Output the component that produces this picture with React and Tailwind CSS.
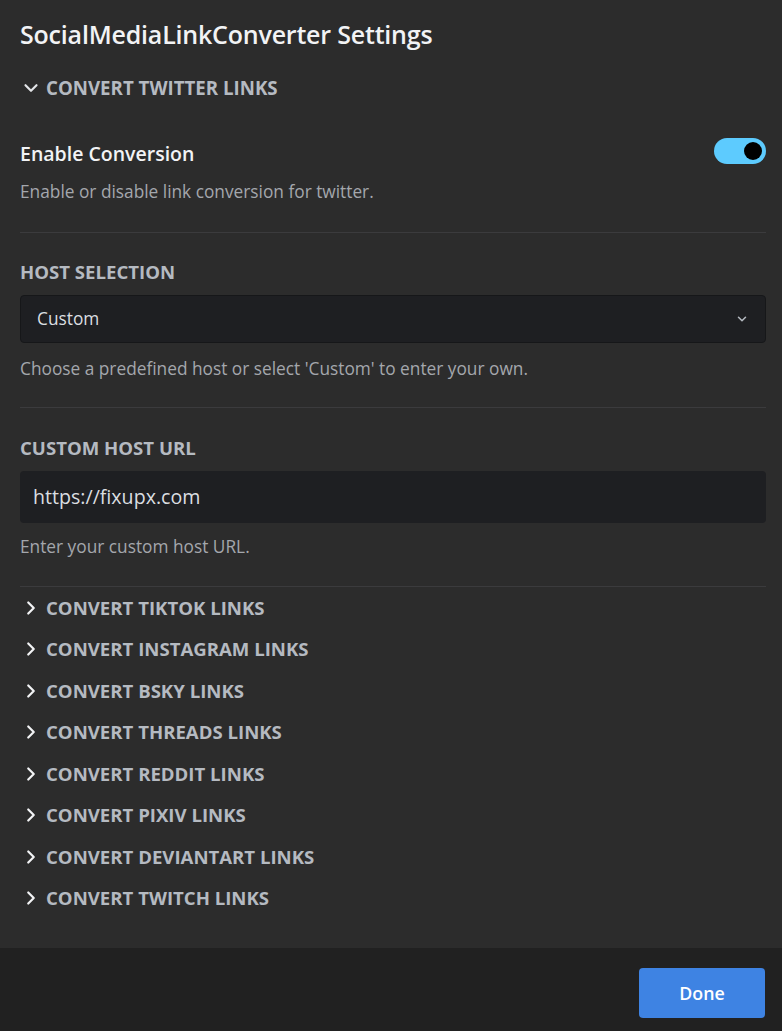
import React from "react";

const font = { fontFamily: '"Open Sans", "Noto Sans", sans-serif' };

function ChevronDown({ className, sw = "2.4" }) {
  return (
    <svg viewBox="0 0 24 24" className={className} fill="none" stroke="currentColor" strokeWidth={sw} strokeLinecap="round" strokeLinejoin="round">
      <path d="M6 9l6 6 6-6" />
    </svg>
  );
}

function ChevronRight({ className }) {
  return (
    <svg viewBox="0 0 24 24" className={className} fill="none" stroke="currentColor" strokeWidth="2.4" strokeLinecap="round" strokeLinejoin="round">
      <path d="M9 6l6 6-6 6" />
    </svg>
  );
}

const collapsed = [
  "CONVERT TIKTOK LINKS",
  "CONVERT INSTAGRAM LINKS",
  "CONVERT BSKY LINKS",
  "CONVERT THREADS LINKS",
  "CONVERT REDDIT LINKS",
  "CONVERT PIXIV LINKS",
  "CONVERT DEVIANTART LINKS",
  "CONVERT TWITCH LINKS",
];

export default function App() {
  return (
    <div className="min-h-[1031px] h-[1031px] w-[782px] flex flex-col bg-[#2c2c2c]" style={font}>
      <div className="flex-1 flex flex-col pt-[16px] pl-[20px] pr-[16px]">
        <h1 className="h-[36px] leading-[36px] text-[25px] font-semibold text-[#f2f3f5] tracking-[-0.2px]">
          SocialMediaLinkConverter Settings
        </h1>

        <div className="mt-[18px] h-[36px] flex items-center">
          <ChevronDown className="w-[22px] h-[22px] text-[#e3e5e8] mr-[4px]" />
          <span className="text-[18.7px] font-bold text-[#b5bac1]">CONVERT TWITTER LINKS</span>
        </div>

        <div className="mt-[32px] h-[28px] flex items-center justify-between">
          <span className="text-[19.5px] font-semibold text-[#f2f3f5] leading-[28px] pt-[3px]">Enable Conversion</span>
          <div className="w-[52px] h-[26px] rounded-full bg-[#5dcbfe] flex items-center justify-end pr-[4px] -mt-[2px]">
            <div className="w-[18px] h-[18px] rounded-full bg-black" />
          </div>
        </div>
        <p className="mt-[14px] h-[24px] leading-[24px] text-[17.3px] text-[#a4a7ac]">
          Enable or disable link conversion for twitter.
        </p>

        <div className="mt-[28px] h-px bg-[#3b3b3d]" />

        <div className="mt-[27px] h-[24px] leading-[24px] text-[18.6px] font-bold text-[#b5bac1]">HOST SELECTION</div>
        <div className="mt-[11px] h-[48px] rounded-[4px] bg-[#1e1f22] border border-[#161719] flex items-center justify-between pl-[16px] pr-[16px]">
          <span className="text-[17.3px] text-[#dbdee1]">Custom</span>
          <ChevronDown className="w-[14px] h-[14px] text-[#b5bac1]" sw="2.6" />
        </div>
        <p className="mt-[14px] h-[24px] leading-[24px] text-[17.3px] text-[#a4a7ac]">
          Choose a predefined host or select 'Custom' to enter your own.
        </p>

        <div className="mt-[26px] h-px bg-[#3b3b3d]" />

        <div className="mt-[28px] h-[24px] leading-[24px] text-[18.6px] font-bold text-[#b5bac1]">CUSTOM HOST URL</div>
        <div className="mt-[11px] h-[52px] rounded-[4px] bg-[#1e1f22] flex items-center pl-[13px]">
          <span className="text-[19.6px] text-[#dbdee1]">https://fixupx.com</span>
        </div>
        <p className="mt-[12px] h-[24px] leading-[24px] text-[17.3px] text-[#a4a7ac]">Enter your custom host URL.</p>

        <div className="mt-[27px] h-px bg-[#3b3b3d]" />

        <div className="flex flex-col">
          {collapsed.map((t) => (
            <div key={t} className="h-[41.5px] flex items-center">
              <ChevronRight className="w-[22px] h-[22px] text-[#f2f3f5] mr-[4px]" />
              <span className="text-[18.6px] font-bold text-[#b5bac1]">{t}</span>
            </div>
          ))}
        </div>
      </div>

      <div className="h-[83px] bg-[#212121] flex justify-end items-start pt-[20px] pr-[17px]">
        <button className="w-[126px] h-[50px] rounded-[4px] bg-[#3e83e3] text-white text-[17.8px] font-semibold">
          Done
        </button>
      </div>
    </div>
  );
}
